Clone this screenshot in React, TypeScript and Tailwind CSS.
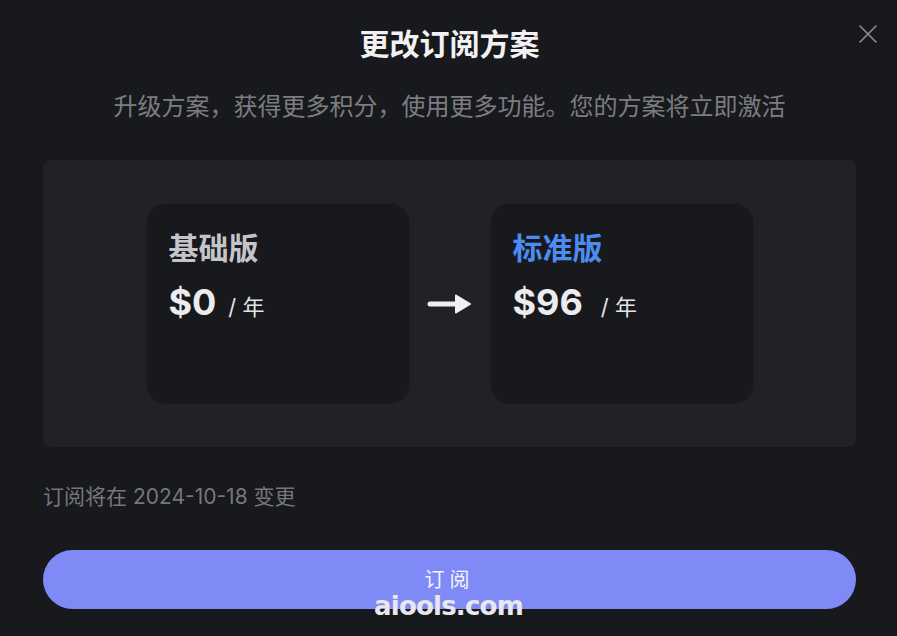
export default function App() {
  const font = "font-['Inter','Noto_Sans_CJK_SC',sans-serif]";
  const plans = [
    { name: "基础版", price: "$0", accent: false },
    { name: "标准版", price: "$96", accent: true },
  ];
  return (
    <div className={`relative h-[636px] w-[897px] overflow-hidden bg-[#18191c] ${font}`}>
      <button className="absolute right-[19px] top-[24px] text-[#8d8e92]" aria-label="close">
        <svg width="20" height="20" viewBox="0 0 20 20" fill="none" stroke="currentColor" strokeWidth={1.6} strokeLinecap="round">
          <path d="M2 2l16 16M18 2L2 18" />
        </svg>
      </button>

      <div className="flex flex-col pl-[43px] pr-[41px] pt-[24px]">
        <h1 className="text-center text-[30px] font-bold leading-[40px] text-[#f2f2f3]">更改订阅方案</h1>
        <p className="mt-[27px] text-center text-[24px] leading-[32px] text-[#7c7d82]">
          升级方案，获得更多积分，使用更多功能。您的方案将立即激活
        </p>

        <div className="mt-[37px] flex h-[287px] items-center justify-center gap-[16px] rounded-[8px] bg-[#202227]">
          <PlanCard {...plans[0]} />
          <svg width="48" height="24" viewBox="0 0 48 24" className="text-[#f0f0f0]">
            <path d="M4 12h30" stroke="currentColor" strokeWidth={5} strokeLinecap="round" />
            <path d="M30 3.5L44 12L30 20.5Z" fill="currentColor" stroke="currentColor" strokeWidth={2} strokeLinejoin="round" />
          </svg>
          <PlanCard {...plans[1]} />
        </div>

        <p className="mt-[37px] text-[21px] leading-[26px] text-[#76777c]">订阅将在 2024-10-18 变更</p>

        <button className="mt-[40px] flex h-[59px] items-center justify-center rounded-full bg-[#7f8af6] text-[20px] tracking-[0.25em] text-[#f4f4ff]">
          订阅
        </button>
      </div>

      <div className="absolute left-0 right-0 top-[590px] text-center font-['DejaVu_Sans',sans-serif] text-[26px] font-bold leading-[32px] tracking-[-0.03em] text-[#e8e8ec]">
        aiools.com
      </div>
    </div>
  );
}

function PlanCard({ name, price, accent }: { name: string; price: string; accent: boolean }) {
  return (
    <div className="flex h-[201px] w-[264px] flex-col rounded-[20px] border border-[#1c1d21] bg-[#18191c] px-[22px] pt-[24px]">
      <div className={`text-[30px] font-bold leading-[40px] ${accent ? "text-[#4b8cf2]" : "text-[#c4c5c8]"}`}>{name}</div>
      <div className="mt-[12px] flex items-baseline">
        <span className="text-[36px] font-bold leading-[44px] text-[#ececee]">{price}</span>
        <span className={`text-[22px] text-[#e4e4e6] ${accent ? "ml-[18px]" : "ml-[12px]"}`}>/ 年</span>
      </div>
    </div>
  );
}
